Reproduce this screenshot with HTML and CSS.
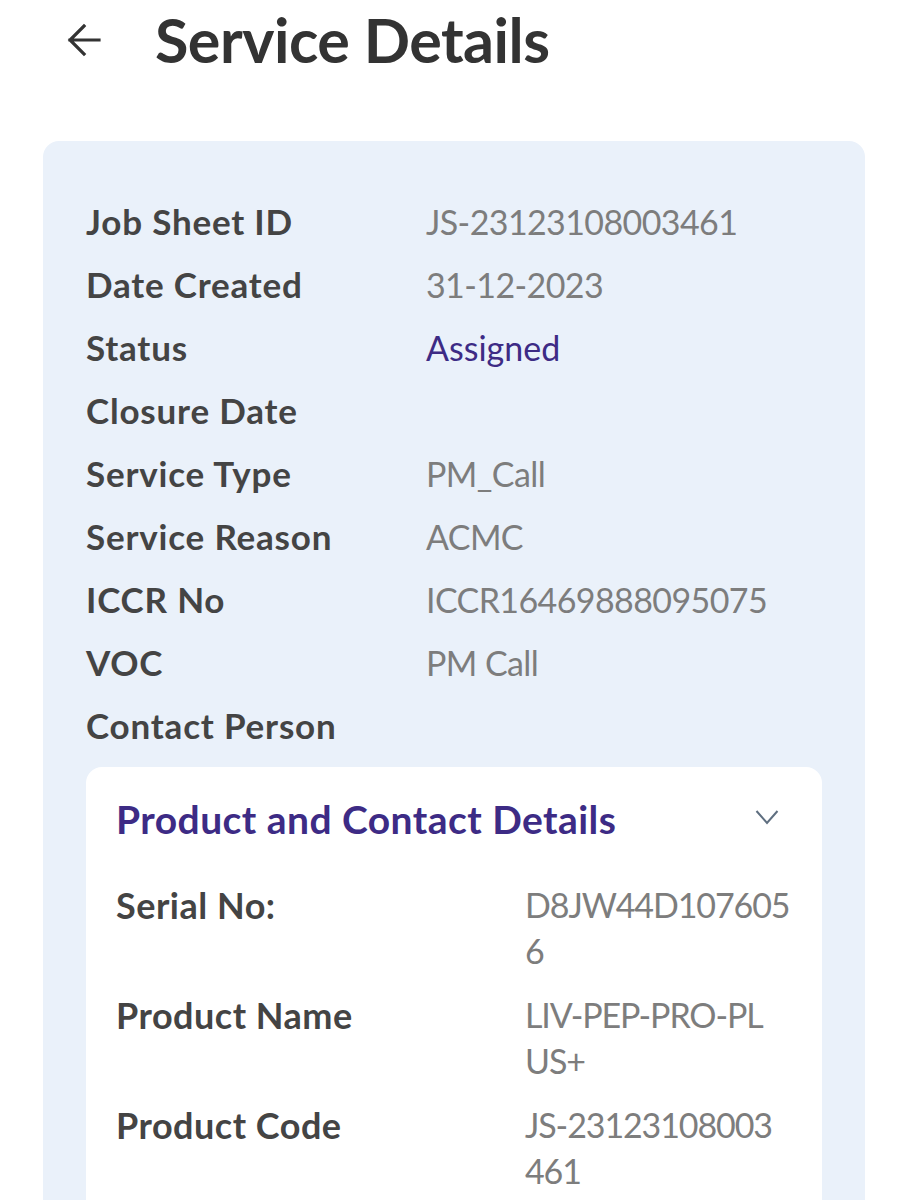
FILE: index.html
```html
<!DOCTYPE html>
<html lang="en">
<head>
<meta charset="utf-8">
<title>Service Details</title>
<link rel="stylesheet" href="styles.css">
</head>
<body>
<header class="topbar">
  <button class="back" aria-label="Back">
    <svg viewBox="0 0 34 34" width="34" height="34"><path d="M32 17H3M17 3L3 17l14 14" fill="none" stroke="#333" stroke-width="3.2" stroke-linecap="square"/></svg>
  </button>
  <h1 class="title">Service Details</h1>
</header>

<section class="card">
  <dl class="info">
    <div class="row"><dt>Job Sheet ID</dt><dd>JS-23123108003461</dd></div>
    <div class="row"><dt>Date Created</dt><dd>31-12-2023</dd></div>
    <div class="row"><dt>Status</dt><dd class="status">Assigned</dd></div>
    <div class="row"><dt>Closure Date</dt><dd></dd></div>
    <div class="row"><dt>Service Type</dt><dd>PM_Call</dd></div>
    <div class="row"><dt>Service Reason</dt><dd>ACMC</dd></div>
    <div class="row"><dt>ICCR No</dt><dd>ICCR16469888095075</dd></div>
    <div class="row"><dt>VOC</dt><dd>PM Call</dd></div>
    <div class="row"><dt>Contact Person</dt><dd></dd></div>
  </dl>

  <div class="panel">
    <div class="panel-head">
      <h2 class="panel-title">Product and Contact Details</h2>
      <svg class="chev" viewBox="0 0 24 16" width="24" height="16"><path d="M1.5 2l10.5 12L22.5 2" fill="none" stroke="#5f6f80" stroke-width="2"/></svg>
    </div>
    <dl class="pinfo">
      <div class="prow"><dt>Serial No:</dt><dd>D8JW44D107605<br>6</dd></div>
      <div class="prow"><dt>Product Name</dt><dd>LIV-PEP-PRO-PL<br>US+</dd></div>
      <div class="prow"><dt>Product Code</dt><dd>JS-23123108003<br>461</dd></div>
    </dl>
  </div>
</section>
</body>
</html>
```
FILE: styles.css
```css
* { box-sizing: border-box; }
html, body { margin: 0; padding: 0; background: #fff; }
body {
  font-family: Lato, "Noto Sans", sans-serif;
  color: #333;
  width: 909px;
  height: 1200px;
  overflow: hidden;
}
.topbar {
  display: flex;
  align-items: center;
  height: 80px;
  padding-left: 67px;
}
.back {
  border: 0;
  background: none;
  padding: 0;
  width: 34px;
  height: 34px;
  margin-right: 54px;
  display: flex;
}
.title {
  margin: 0;
  font-size: 61px;
  font-weight: 700;
  color: #333;
  line-height: 80px;
  letter-spacing: -0.5px;
}
.card {
  margin: 61px 44px 0 43px;
  background: #eaf1fa;
  border-radius: 16px;
  padding: 49px 43px 40px 43px;
}
.info { margin: 0; }
.row {
  display: grid;
  grid-template-columns: 340px 1fr;
  line-height: 63px;
  font-size: 35px;
}
dt, dd { margin: 0; }
.row dt { font-weight: 700; color: #444; letter-spacing: 0.8px; }
.row dd { color: #7d7d7d; font-size: 34px; letter-spacing: -0.6px; }
.row dd.status { color: #3d2b85; letter-spacing: 0; }
.panel {
  margin-top: 10px;
  background: #fff;
  border-radius: 16px;
  padding: 24px 43px 30px 30px;
}
.panel-head {
  display: flex;
  align-items: center;
  justify-content: space-between;
}
.panel-title {
  margin: 0;
  font-size: 39px;
  font-weight: 700;
  color: #3d2b85;
  line-height: 56px;
  letter-spacing: 0.45px;
}
.chev { margin-top: -4px; }
.pinfo { margin: 35px 0 0; }
.prow {
  display: grid;
  grid-template-columns: 409px 1fr;
  font-size: 36px;
  line-height: 46px;
  margin-bottom: 18px;
}
.prow dt { font-weight: 700; color: #444; letter-spacing: 0.5px; }
.prow dd { color: #7d7d7d; font-size: 34px; letter-spacing: -1.1px; }
```
